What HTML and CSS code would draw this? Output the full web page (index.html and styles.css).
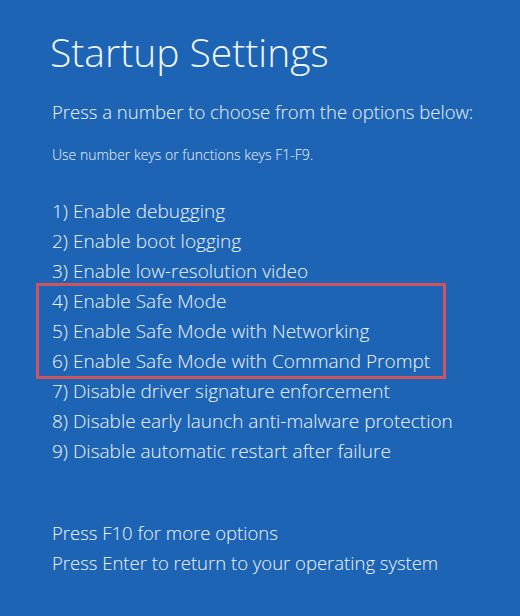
FILE: index.html
```html
<!DOCTYPE html>
<html lang="en">
<head>
	<meta charset="UTF-8">
	<title>Startup Settings</title>
	<link rel="stylesheet" href="styles.css">
</head>
<body>
	<div class="screen">
		<h1 class="title">Startup Settings</h1>
		<p class="lead">Press a number to choose from the options below:</p>
		<p class="hint">Use number keys or functions keys F1-F9.</p>

		<ul class="options">
			<li>1) Enable debugging</li>
			<li>2) Enable boot logging</li>
			<li>3) Enable low-resolution video</li>
			<li class="mark">
				<ul class="options">
					<li>4) Enable Safe Mode</li>
					<li>5) Enable Safe Mode with Networking</li>
					<li>6) Enable Safe Mode with Command Prompt</li>
				</ul>
			</li>
			<li>7) Disable driver signature enforcement</li>
			<li>8) Disable early launch anti-malware protection</li>
			<li>9) Disable automatic restart after failure</li>
		</ul>

		<ul class="footer">
			<li>Press F10 for more options</li>
			<li>Press Enter to return to your operating system</li>
		</ul>
	</div>
</body>
</html>
```

FILE: styles.css
```css
*{margin: 0;padding: 0;}
html,body{
	background: #1d64b5;
}
body{
	font-family: "Open Sans", "Noto Sans", sans-serif;
	font-weight: 300;
	color: #f2f6fb;
}
.screen{
	width: 520px;
	height: 616px;
	padding: 26px 0 0 52px;
	box-sizing: border-box;
}
.title{
	font-size: 39px;
	font-weight: 300;
	line-height: 52px;
	margin-left: -2px;
}
.lead{
	font-size: 18.5px;
	line-height: 26px;
	margin-top: 21px;
}
.hint{
	font-size: 14px;
	line-height: 20px;
	margin-top: 20px;
}
.options{
	list-style: none;
}
.options li{
	font-size: 19px;
	line-height: 30px;
}
.screen > .options{
	margin-top: 31px;
}
.options li.mark{
	width: 410px;
	box-sizing: border-box;
	border: 3px solid #cc5560;
	margin: -3px 0 -3px -16px;
	padding-left: 13px;
}
.footer{
	list-style: none;
	margin-top: 52px;
}
.footer li{
	font-size: 18.5px;
	line-height: 30px;
}
```
